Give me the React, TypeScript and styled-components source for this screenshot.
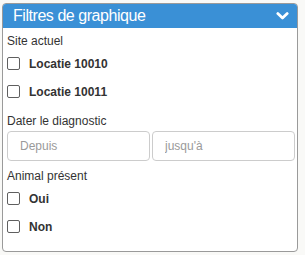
import React from "react";
import styled, { createGlobalStyle } from "styled-components";

const GlobalStyle = createGlobalStyle`
  html, body {
    margin: 0;
    padding: 0;
    background: #f9f9f7;
  }
  body {
    font-family: "Liberation Sans", Arial, sans-serif;
    color: #333;
  }
`;

const Wrapper = styled.div`
  padding: 3px 4px 3px 2px;
`;

const Panel = styled.div`
  width: 296px;
  height: 249px;
  box-sizing: border-box;
  border: 1px solid #9a9a9a;
  border-radius: 4px;
  background: #fff;
  overflow: hidden;
`;

const PanelHeader = styled.div`
  display: flex;
  align-items: center;
  justify-content: space-between;
  height: 24px;
  padding: 0 8px 0 10px;
  background: #3a90d6;
  color: #fff;
  font-size: 16px;
  letter-spacing: -0.45px;
`;

const PanelBody = styled.div`
  padding: 6px 2px 0 4px;
`;

const GroupLabel = styled.div<{ $gap?: number }>`
  font-size: 12px;
  line-height: 14px;
  margin-bottom: ${p => p.$gap ?? 9}px;
  color: #333;
`;

const CheckRow = styled.label`
  display: flex;
  align-items: center;
  gap: 9px;
  height: 13px;
  margin-bottom: 15px;
  font-size: 12px;
  font-weight: bold;
  color: #333;

  &:last-child {
    margin-bottom: 0;
  }
`;

const CheckGroup = styled.div`
  margin-bottom: 16px;
`;

const Box = styled.span`
  width: 11px;
  height: 11px;
  border: 1px solid #5f5f5f;
  border-radius: 2px;
  background: #fff;
  flex: none;
`;

const DateRow = styled.div`
  display: grid;
  grid-template-columns: 1fr 1fr;
  gap: 2px;
  margin-bottom: 8px;
`;

const DateInput = styled.input`
  height: 30px;
  box-sizing: border-box;
  border: 1px solid #ccc;
  border-radius: 4px;
  padding: 0 12px;
  font-family: "Liberation Sans", Arial, sans-serif;
  font-size: 12px;
  color: #333;
  outline: none;
  min-width: 0;

  &::placeholder {
    color: #9a9a9a;
  }
`;

const Chevron = () => (
  <svg width="13" height="8" viewBox="0 0 13 8">
    <path
      d="M1.8 1.6 L6.5 6 L11.2 1.6"
      fill="none"
      stroke="#fff"
      strokeWidth="2.8"
      strokeLinecap="round"
      strokeLinejoin="round"
    />
  </svg>
);

const Check = ({ label }: { label: string }) => (
  <CheckRow>
    <Box />
    {label}
  </CheckRow>
);

export default function App() {
  return (
    <>
      <GlobalStyle />
      <Wrapper>
        <Panel>
          <PanelHeader>
            Filtres de graphique
            <Chevron />
          </PanelHeader>
          <PanelBody>
            <GroupLabel>Site actuel</GroupLabel>
            <CheckGroup>
              <Check label="Locatie 10010" />
              <Check label="Locatie 10011" />
            </CheckGroup>
            <GroupLabel $gap={3}>Dater le diagnostic</GroupLabel>
            <DateRow>
              <DateInput placeholder="Depuis" />
              <DateInput placeholder="jusqu'à" />
            </DateRow>
            <GroupLabel>Animal présent</GroupLabel>
            <CheckGroup>
              <Check label="Oui" />
              <Check label="Non" />
            </CheckGroup>
          </PanelBody>
        </Panel>
      </Wrapper>
    </>
  );
}
